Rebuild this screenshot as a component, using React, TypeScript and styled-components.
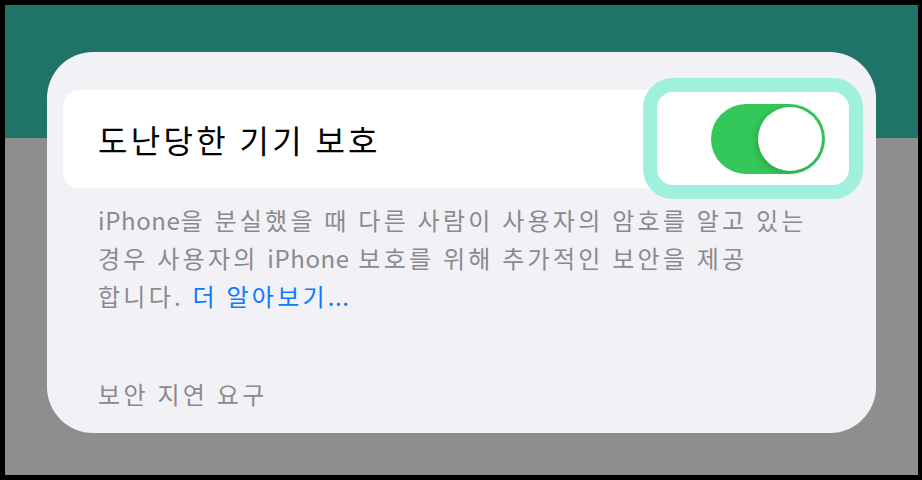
import styled, { createGlobalStyle } from "styled-components";

const GlobalStyle = createGlobalStyle`
  html, body { margin: 0; padding: 0; background: #000; }
  body { font-family: "Noto Sans CJK KR", "Noto Sans", sans-serif; }
`;

export default function App() {
  return (
    <>
      <GlobalStyle />
      <Frame>
        <Screen>
          <Card>
            <SettingRow>
              <RowTitle>도난당한 기기 보호</RowTitle>
              <ToggleWrap>
                <Highlight />
                <Toggle aria-checked="true" role="switch">
                  <Knob />
                </Toggle>
              </ToggleWrap>
            </SettingRow>
            <Footnote>
              <Latin>iPhone</Latin>을 분실했을 때 다른 사람이 사용자의 암호를 알고 있는
              <br />
              경우 사용자의 <Latin>iPhone</Latin> 보호를 위해 추가적인 보안을 제공
              <br />
              합니다. <MoreLink>더 알아보기<Latin>...</Latin></MoreLink>
            </Footnote>
            <SectionHeader>보안 지연 요구</SectionHeader>
          </Card>
        </Screen>
      </Frame>
    </>
  );
}

const Frame = styled.div`
  width: 922px;
  height: 480px;
  box-sizing: border-box;
  padding: 5px 4px 5px 5px;
  background: #000;
`;

const Screen = styled.div`
  height: 100%;
  box-sizing: border-box;
  padding: 47px 0 0 42px;
  background: linear-gradient(#1f7369 0 133px, #8e8e8e 133px 100%);
`;

const Card = styled.div`
  width: 829px;
  height: 381px;
  box-sizing: border-box;
  padding: 38px 16px 0;
  background: #f2f1f6;
  border-radius: 46px;
`;

const SettingRow = styled.div`
  display: flex;
  align-items: center;
  justify-content: space-between;
  height: 98px;
  padding: 0 35px;
  background: #fff;
  border-radius: 16px;
`;

const RowTitle = styled.span`
  font-size: 32px;
  color: #000;
  letter-spacing: 3.3px;
`;

const ToggleWrap = styled.div`
  position: relative;
  display: flex;
`;

const Highlight = styled.span`
  position: absolute;
  left: -68px;
  right: -38px;
  top: -26px;
  bottom: -25px;
  border: 14px solid #a0f0de;
  border-radius: 30px;
`;

const Toggle = styled.div`
  position: relative;
  width: 114px;
  height: 70px;
  border-radius: 35px;
  background: #34c759;
`;

const Knob = styled.span`
  position: absolute;
  right: 3px;
  top: 3px;
  width: 64px;
  height: 64px;
  border-radius: 50%;
  background: #fff;
  box-shadow: -2px 2px 6px rgba(0, 0, 0, 0.18);
`;

const Footnote = styled.p`
  margin: 13px 0 0;
  padding: 0 35px;
  font-size: 24px;
  line-height: 38px;
  letter-spacing: 3.25px;
  color: #8a8a8e;
`;

const Latin = styled.span`
  letter-spacing: 0.6px;
`;

const MoreLink = styled.span`
  color: #0a7aff;
`;

const SectionHeader = styled.div`
  margin-top: 64px;
  padding: 0 35px;
  font-size: 24px;
  line-height: 30px;
  letter-spacing: 3.3px;
  color: #8a8a8e;
`;
